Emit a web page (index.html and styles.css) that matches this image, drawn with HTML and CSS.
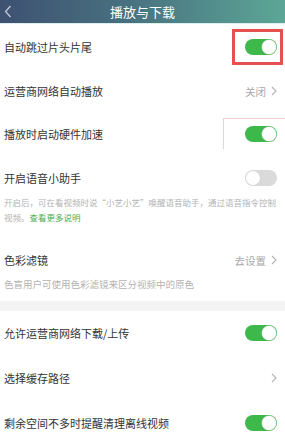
FILE: index.html
```html
<!DOCTYPE html>
<html lang="zh-CN">

<head>
    <meta charset="UTF-8">
    <meta name="viewport" content="width=device-width, initial-scale=1.0">
    <title>播放与下载</title>
    <link rel="stylesheet" href="styles.css">
</head>

<body>
    <div class="header">
        <span class="back">
            <svg width="8" height="13" viewBox="0 0 8 13">
                <path d="M6.5 1 L1.6 6.5 L6.5 12" fill="none" stroke="#c3cbd8" stroke-width="1.3" />
            </svg>
        </span>
        <h1 class="title">播放与下载</h1>
        <span class="back-space"></span>
    </div>

    <div class="row row-first">
        <span class="label">自动跳过片头片尾</span>
        <span class="switch on marked"></span>
    </div>
    <div class="row">
        <span class="label">运营商网络自动播放</span>
        <span class="value">关闭
            <svg width="6" height="10" viewBox="0 0 6 10">
                <path d="M1 1 L5 5 L1 9" fill="none" stroke="#b4b4b4" stroke-width="1.1" />
            </svg>
        </span>
    </div>
    <div class="row row-short">
        <span class="label">播放时启动硬件加速</span>
        <span class="switch on traced"></span>
    </div>

    <div class="block voice">
        <div class="block-head">
            <span class="label">开启语音小助手</span>
            <span class="switch off"></span>
        </div>
        <p class="desc">开启后，可在看视频时说“小艺小艺”唤醒语音助手，通过语音指令控制<br>视频。<a>查看更多说明</a></p>
    </div>

    <div class="block filter">
        <div class="block-head">
            <span class="label">色彩滤镜</span>
            <span class="value">去设置
                <svg width="6" height="10" viewBox="0 0 6 10">
                    <path d="M1 1 L5 5 L1 9" fill="none" stroke="#b4b4b4" stroke-width="1.1" />
                </svg>
            </span>
        </div>
        <p class="desc">色盲用户可使用色彩滤镜来区分视频中的原色</p>
    </div>

    <div class="band"></div>

    <div class="row row-tall">
        <span class="label">允许运营商网络下载/上传</span>
        <span class="switch on"></span>
    </div>
    <div class="row row-tall">
        <span class="label">选择缓存路径</span>
        <span class="value">
            <svg width="6" height="10" viewBox="0 0 6 10">
                <path d="M1 1 L5 5 L1 9" fill="none" stroke="#b4b4b4" stroke-width="1.1" />
            </svg>
        </span>
    </div>
    <div class="row row-tall">
        <span class="label">剩余空间不多时提醒清理离线视频</span>
        <span class="switch on"></span>
    </div>
</body>

</html>
```

FILE: styles.css
```css
* {
    margin: 0;
    padding: 0;
    box-sizing: border-box;
}

body {
    width: 285px;
    font-family: "Noto Sans CJK SC", "Noto Sans", sans-serif;
    background-color: #fff;
    overflow: hidden;
}

.header {
    height: 24px;
    display: flex;
    align-items: center;
    background: linear-gradient(90deg, #3e5172 0%, #48717f 45%, #5ca797 100%);
    border-bottom: 1px solid #dcefee;
}

.back {
    width: 30px;
    padding-left: 4px;
    display: flex;
}

.title {
    flex: 1;
    text-align: center;
    color: #fff;
    font-size: 13px;
    font-weight: normal;
    line-height: 23px;
}

.back-space {
    width: 30px;
}

.row {
    height: 44px;
    display: flex;
    align-items: center;
    justify-content: space-between;
    padding: 0 8px 0 4px;
}

.row-first {
    height: 45px;
}

.row-short {
    height: 42px;
}

.row-tall {
    height: 45px;
}

.label {
    font-size: 11px;
    color: #333;
}

.value {
    display: flex;
    align-items: center;
    gap: 5px;
    font-size: 10.5px;
    color: #a9a9a9;
}

.switch {
    width: 32px;
    height: 16px;
    border-radius: 8px;
    position: relative;
}

.switch::before {
    content: "";
    position: absolute;
    top: 1px;
    width: 14px;
    height: 14px;
    border-radius: 50%;
    background-color: #fff;
    box-shadow: 0 0 0 0.5px #d0d0d0;
}

.on {
    background-color: #3cb94a;
}

.on::before {
    right: 1px;
}

.off {
    background-color: #dadada;
}

.off::before {
    left: 1px;
}

/* red marker drawn over the first switch */
.marked::after {
    content: "";
    position: absolute;
    left: -13px;
    right: -6px;
    top: -10px;
    bottom: -10px;
    border: 3px solid #e6504e;
}

/* faint leftover marker lines */
.traced::after {
    content: "";
    position: absolute;
    left: -22px;
    right: -8px;
    top: -8px;
    height: 30px;
    border-top: 1px solid #f6cccc;
    border-left: 1px solid #f6cccc;
}

.block {
    padding: 15px 8px 0 4px;
}

.block-head {
    height: 16px;
    display: flex;
    align-items: center;
    justify-content: space-between;
}

.desc {
    font-size: 9.5px;
    line-height: 14.5px;
    color: #b3b3b3;
    white-space: nowrap;
}

.desc a {
    color: #4cae50;
}

.voice .desc {
    margin-top: 9px;
    font-size: 8.5px;
}

.filter {
    padding-top: 28px;
    padding-bottom: 9px;
}

.filter .desc {
    margin-top: 9px;
}

.band {
    height: 10px;
    background-color: #f4f4f4;
}
```
